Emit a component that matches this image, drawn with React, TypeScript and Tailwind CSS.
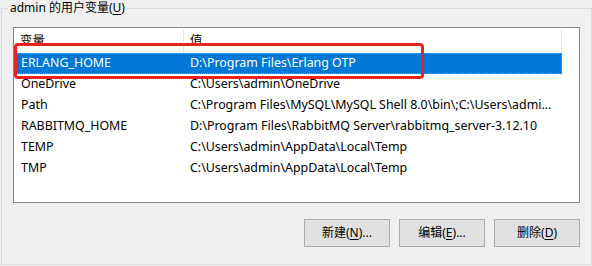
import React from "react";

const rows = [
  { name: "ERLANG_HOME", value: "D:\\Program Files\\Erlang OTP", selected: true },
  { name: "OneDrive", value: "C:\\Users\\admin\\OneDrive" },
  { name: "Path", value: "C:\\Program Files\\MySQL\\MySQL Shell 8.0\\bin\\;C:\\Users\\admi..." },
  { name: "RABBITMQ_HOME", value: "D:\\Program Files\\RabbitMQ Server\\rabbitmq_server-3.12.10" },
  { name: "TEMP", value: "C:\\Users\\admin\\AppData\\Local\\Temp" },
  { name: "TMP", value: "C:\\Users\\admin\\AppData\\Local\\Temp" },
];

function Btn({ label, mn, tail }: { label: string; mn: string; tail: string }) {
  return (
    <button className="w-[86px] h-[28px] bg-[#e1e1e1] border border-[#adadad] text-[12px] text-black flex items-center justify-center">
      {label}(<span className="underline underline-offset-2">{mn}</span>){tail}
    </button>
  );
}

export default function App() {
  return (
    <div className="w-[592px] h-[266px] bg-[#f0f0f0] pt-[8px] font-['Noto_Sans','Noto_Sans_CJK_SC',sans-serif] text-[12px] text-black">
      <div className="relative ml-[1px] w-[591px] h-[257px] border border-[#dcdcdc] pt-[18px] pl-[11px] pr-[11px]">
        <div className="absolute -top-[10px] left-[6px] px-[2px] bg-[#f0f0f0] leading-[18px]">
          admin 的用户变量(<span className="underline underline-offset-2">U</span>)
        </div>

        {/* list view */}
        <div className="relative h-[176px] border border-[#828790] bg-white text-[12.4px]">
          <div className="flex h-[25px] w-[548px] pt-[2px]">
            <div className="w-[170px] border-r border-[#e5e5e5] pl-[6px] flex items-center">变量</div>
            <div className="flex-1 border-r border-[#e5e5e5] pl-[6px] flex items-center">值</div>
          </div>
          {rows.map((r) => (
            <div
              key={r.name}
              className={`flex h-[21px] w-[548px] items-center ${
                r.selected ? "bg-[#0078d7] text-white outline-1 outline-dotted -outline-offset-1 outline-[#6fa8dc]" : ""
              }`}
            >
              <div className="w-[170px] pl-[7px] whitespace-nowrap">{r.name}</div>
              <div className="flex-1 pl-[6px] whitespace-nowrap">{r.value}</div>
            </div>
          ))}
          {/* red highlight */}
          <div className="absolute left-0 top-[15px] w-[410px] h-[36px] border-[3px] border-[#e8231c] rounded-[4px]" />
        </div>

        <div className="flex justify-end gap-[9px] mt-[16px]">
          <Btn label="新建" mn="N" tail="..." />
          <Btn label="编辑" mn="E" tail="..." />
          <Btn label="删除" mn="D" tail="" />
        </div>
      </div>
    </div>
  );
}
